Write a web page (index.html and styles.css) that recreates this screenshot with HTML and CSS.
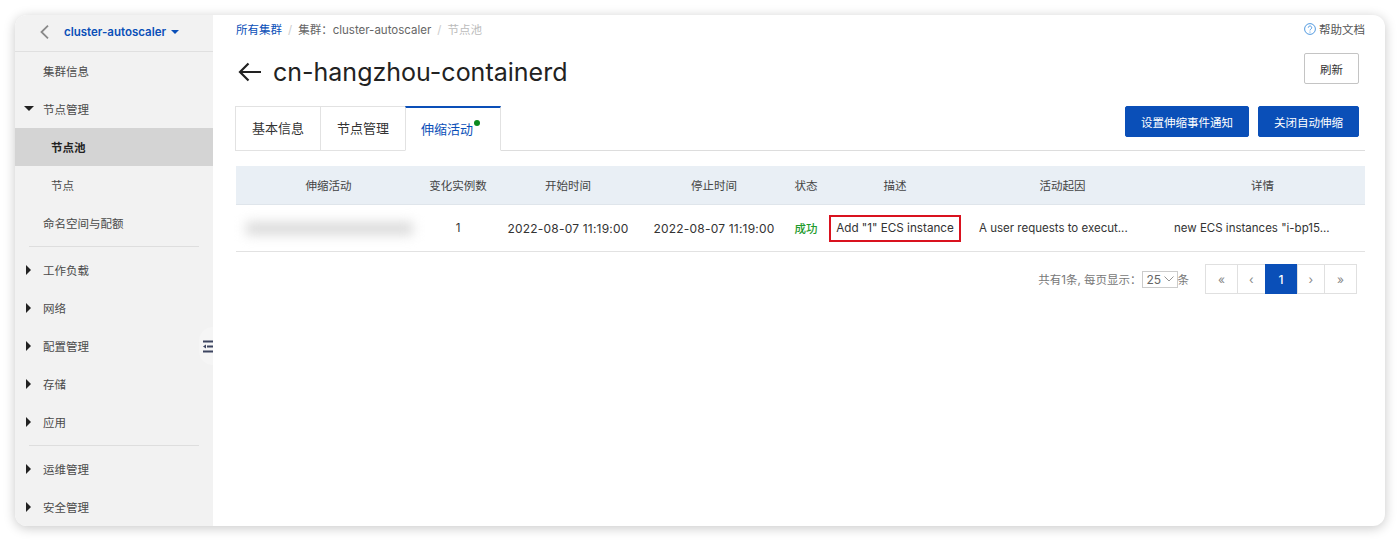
FILE: index.html
```html
<!DOCTYPE html>
<html lang="zh-CN">
<head>
  <meta charset="UTF-8" />
  <title>cn-hangzhou-containerd</title>
  <link rel="stylesheet" href="styles.css">
</head>
<body>
  <div class="window">
    <aside class="sidebar">
      <div class="side-head">
        <svg class="back" width="9" height="14" viewBox="0 0 9 14"><path d="M8 0.700 L1.500 7 L8 13.300" fill="none" stroke="#8a8a8a" stroke-width="1.800"/></svg>
        <span class="cluster">cluster-autoscaler</span>
        <span class="caret-blue"></span>
      </div>
      <div class="item">集群信息</div>
      <div class="item"><span class="arrow-down"></span>节点管理</div>
      <div class="item sub active">节点池</div>
      <div class="item sub">节点</div>
      <div class="item">命名空间与配额</div>
      <div class="divider"></div>
      <div class="item"><span class="arrow-right"></span>工作负载</div>
      <div class="item"><span class="arrow-right"></span>网络</div>
      <div class="item"><span class="arrow-right"></span>配置管理</div>
      <div class="item"><span class="arrow-right"></span>存储</div>
      <div class="item"><span class="arrow-right"></span>应用</div>
      <div class="divider"></div>
      <div class="item"><span class="arrow-right"></span>运维管理</div>
      <div class="item"><span class="arrow-right"></span>安全管理</div>
      <div class="collapse">
        <svg width="10" height="13" viewBox="0 0 10 13"><path d="M0 0.500h10v2H0zM0 10.500h10v2H0zM4 5.500h6v2H4zM0 6.500 L3 4.500 V8.500z" fill="#3d4560"/></svg>
      </div>
    </aside>

    <main class="main">
      <div class="topline">
        <div class="crumbs">
          <a class="link">所有集群</a><span class="sep">/</span><span>集群：cluster-autoscaler</span><span class="sep">/</span><span class="muted">节点池</span>
        </div>
        <div class="help">
          <svg width="12" height="12" viewBox="0 0 12 12"><circle cx="6" cy="6" r="5.400" fill="none" stroke="#3f8fdc" stroke-width="0.900"/><path d="M4.300 4.700a1.700 1.700 0 1 1 2.600 1.400c-.6.4-.9.700-.9 1.300" fill="none" stroke="#3f8fdc" stroke-width="0.900"/><circle cx="6" cy="9" r="0.600" fill="#3f8fdc"/></svg>
          帮助文档
        </div>
      </div>

      <div class="title-row">
        <h1>
          <svg width="24" height="20" viewBox="0 0 24 20"><path d="M23 10H2M10.500 1.500L2 10l8.500 8.500" fill="none" stroke="#222" stroke-width="2.200"/></svg>
          cn-hangzhou-containerd
        </h1>
        <button class="btn">刷新</button>
      </div>

      <div class="tab-row">
        <div class="tabs">
          <div class="tab">基本信息</div>
          <div class="tab">节点管理</div>
          <div class="tab current">伸缩活动<span class="dot"></span></div>
        </div>
        <div class="actions">
          <button class="btn primary wide">设置伸缩事件通知</button>
          <button class="btn primary">关闭自动伸缩</button>
        </div>
      </div>

      <div class="table">
        <div class="row head">
          <div>伸缩活动</div>
          <div>变化实例数</div>
          <div>开始时间</div>
          <div>停止时间</div>
          <div>状态</div>
          <div>描述</div>
          <div>活动起因</div>
          <div>详情</div>
        </div>
        <div class="row body">
          <div><div class="blurred"></div></div>
          <div>1</div>
          <div class="date">2022-08-07 11:19:00</div>
          <div class="date">2022-08-07 11:19:00</div>
          <div class="ok">成功</div>
          <div><span class="marked">Add "1" ECS instance</span></div>
          <div class="left">A user requests to execut...</div>
          <div class="left">new ECS instances "i-bp15...</div>
        </div>
      </div>

      <div class="pager-row">
        <span class="total">共有1条, 每页显示：</span>
        <span class="size">25<svg width="10" height="6" viewBox="0 0 10 6"><path d="M0.500 0.500L5 5l4.500-4.500" fill="none" stroke="#888" stroke-width="0.900"/></svg></span>
        <span class="total">条</span>
        <div class="pager">
          <span class="page w32">«</span>
          <span class="page">‹</span>
          <span class="page w32 on">1</span>
          <span class="page">›</span>
          <span class="page w32">»</span>
        </div>
      </div>
    </main>
  </div>
</body>
</html>
```

FILE: styles.css
```css
* {
  box-sizing: border-box;
}
body {
  margin: 0;
  background: #fff;
  font-family: Inter, "Noto Sans CJK SC", sans-serif;
  font-size: 11.500px;
  color: #333;
}
.window {
  display: flex;
  width: 1370px;
  height: 511px;
  margin: 15px;
  background: #fff;
  border-radius: 12px;
  box-shadow: 0 2px 12px rgba(0,0,0,0.22);
  overflow: hidden;
}

/* sidebar */
.sidebar {
  position: relative;
  flex: 0 0 198px;
  background: #f2f2f2;
}
.side-head {
  display: flex;
  align-items: center;
  height: 37px;
  padding: 0 0 3px 25px;
  border-bottom: 1px solid #e0e0e0;
}
.back {
  margin-right: 15px;
}
.cluster {
  color: #0a4fb8;
  font-weight: 600;
}
.caret-blue {
  margin-left: 5px;
  border: 4px solid transparent;
  border-top-color: #0a4fb8;
  border-bottom: 0;
}
.item {
  position: relative;
  display: flex;
  align-items: center;
  height: 38px;
  padding: 0 0 1px 28px;
  color: #4a4a4a;
}
.item.sub {
  padding-left: 36px;
}
.item.active {
  background: #d4d4d4;
  color: #222;
  font-weight: 700;
}
.arrow-down {
  position: absolute;
  left: 9px;
  top: 16px;
  border: 5px solid transparent;
  border-top-color: #222;
  border-bottom: 0;
}
.arrow-right {
  position: absolute;
  left: 11px;
  top: 14px;
  border: 5px solid transparent;
  border-left-color: #222;
  border-right: 0;
}
.divider {
  height: 1px;
  margin: 4px 14px 4px 14px;
  background: #dedede;
}
.collapse {
  position: absolute;
  right: 0;
  top: 312px;
  display: flex;
  align-items: center;
  justify-content: flex-end;
  width: 14px;
  height: 38px;
  background: #f5f5f5;
  border-radius: 14px 0 0 14px;
}

/* main */
.main {
  flex: 1;
  padding: 0 20px 0 23px;
}
.topline {
  display: flex;
  justify-content: space-between;
  align-items: center;
  height: 28px;
}
.crumbs {
  color: #666;
}
.link {
  color: #0a4fb8;
}
.sep {
  margin: 0 6px;
  color: #ccc;
}
.muted {
  color: #bbb;
}
.help {
  display: flex;
  align-items: center;
  gap: 3px;
  color: #555;
}
.title-row {
  display: flex;
  justify-content: space-between;
  align-items: flex-start;
  height: 63px;
  padding-right: 6px;
}
h1 {
  display: flex;
  align-items: center;
  gap: 11px;
  margin: 9px 0 0 2px;
  color: #222;
  font-size: 25px;
  font-weight: 400;
  line-height: 40px;
}
.btn {
  height: 31px;
  width: 55px;
  margin-top: 10px;
  padding: 0;
  background: #fff;
  border: 1px solid #c4c4c4;
  border-radius: 2px;
  color: #333;
  font: inherit;
}
.tab-row {
  display: flex;
  justify-content: space-between;
  height: 45px;
  padding-right: 6px;
  border-bottom: 1px solid #ddd;
}
.tabs {
  display: flex;
  margin-left: -1px;
}
.tab {
  display: flex;
  align-items: center;
  justify-content: center;
  width: 85px;
  height: 45px;
  padding-bottom: 2px;
  background: #fff;
  border: 1px solid #e2e2e2;
  border-right: 0;
  font-size: 13px;
  color: #333;
}
.tab.current {
  justify-content: flex-start;
  width: 96px;
  padding-left: 15px;
  border-top: 2px solid #0a4fb8;
  border-right: 1px solid #e2e2e2;
  border-bottom-color: #fff;
  color: #0a4fb8;
}
.dot {
  align-self: flex-start;
  width: 6px;
  height: 6px;
  margin: 12px 0 0 1px;
  border-radius: 50%;
  background: #0b8a1f;
}
.actions {
  display: flex;
  gap: 9px;
}
.btn.primary {
  width: 101px;
  height: 31px;
  margin-top: 0;
  background: #0a4fb8;
  border-color: #0a4fb8;
  color: #fff;
}
.btn.primary.wide {
  width: 124px;
}

/* table */
.table {
  margin-top: 15px;
}
.row {
  display: grid;
  grid-template-columns: 185px 74px 146px 146px 38px 140px 195px 205px;
  align-items: center;
  text-align: center;
}
.row.head {
  height: 39px;
  padding-bottom: 1px;
  background: #e9eff5;
  border-bottom: 1px solid #dfe5eb;
  color: #444;
}
.row.body {
  height: 47px;
  border-bottom: 1px solid #e2e2e2;
  color: #333;
}
.date {
  font-size: 12px;
  letter-spacing: 0.200px;
}
.blurred {
  height: 13px;
  margin: 0 8px 0 10px;
  background: #dadada;
  filter: blur(6px);
}
.ok {
  color: #1f9b2e;
  font-weight: 500;
}
.marked {
  display: inline-block;
  width: 132px;
  height: 27px;
  border: 2px solid #d9121f;
  font-size: 11.700px;
  line-height: 23px;
  white-space: nowrap;
}
.row .left {
  padding-left: 14px;
  text-align: left;
  white-space: nowrap;
}

/* pagination */
.pager-row {
  display: flex;
  align-items: center;
  justify-content: flex-end;
  height: 30px;
  margin: 12px 8px 0 0;
}
.total {
  color: #777;
}
.size {
  display: flex;
  align-items: center;
  justify-content: space-between;
  width: 36px;
  height: 17px;
  padding: 0 3px 0 4px;
  border: 1px solid #ccc;
  color: #666;
  font-size: 12px;
}
.pager {
  display: flex;
  margin-left: 17px;
}
.page {
  display: flex;
  align-items: center;
  justify-content: center;
  width: 28.500px;
  height: 30px;
  border: 1px solid #e0e0e0;
  margin-left: -1px;
  color: #888;
  font-size: 12px;
}
.page.w32 {
  width: 33px;
}
.page.on {
  background: #0a4fb8;
  border-color: #0a4fb8;
  color: #fff;
  font-weight: 500;
}
```
